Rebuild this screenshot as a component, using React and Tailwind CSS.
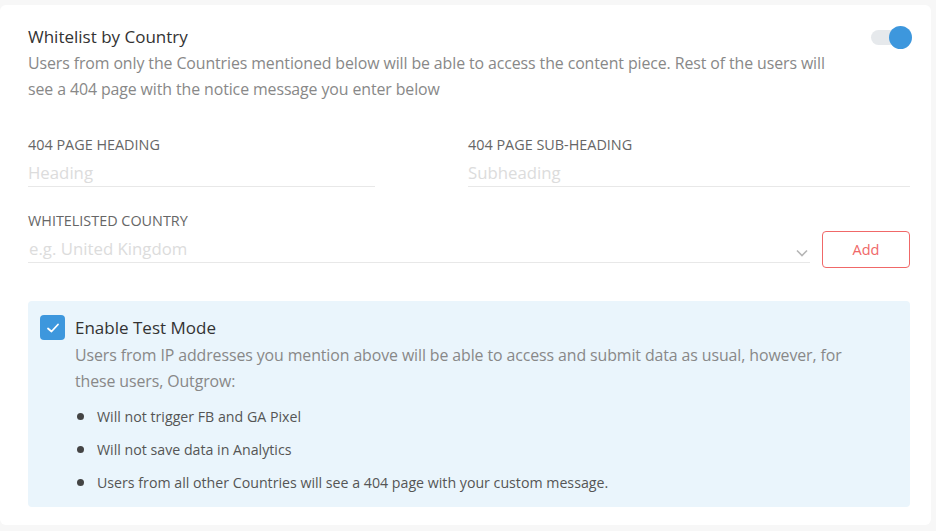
import React from "react";

export default function App() {
  return (
    <div className="w-[936px] h-[531px] bg-[#f7f7f7] pt-[5px] pr-[5px] pb-[6px]" style={{ fontFamily: "'Open Sans', Lato, sans-serif" }}>
      <div className="h-full bg-white rounded-[6px] pl-[28px] pr-[21px] pt-[18px]">
        <div className="flex justify-between">
          <div className="w-[812px]">
            <div className="text-[17px] leading-[28px] text-[#333]">Whitelist by Country</div>
            <p className="text-[15.9px] leading-[26px] text-[#888] mt-[-1px] tracking-[-0.1px]">
              Users from only the Countries mentioned below will be able to access the content piece. Rest of the users will see a 404 page with the notice message you enter below
            </p>
          </div>
          <div className="relative w-[41px] h-[23px] mt-[3px] mr-[-2px]">
            <div className="absolute left-0 top-[4px] w-[36px] h-[15px] rounded-full bg-[#e6e9ec]" />
            <div className="absolute right-0 top-0 w-[23px] h-[23px] rounded-full bg-[#3d97dd]" />
          </div>
        </div>

        <div className="flex gap-[93px] mt-[33px]">
          <div className="w-[347px]">
            <div className="text-[14.4px] leading-[20px] text-[#666]">404 PAGE HEADING</div>
            <div className="text-[16.8px] leading-[24px] text-[#dcdcdc] mt-[6px] pb-[1px] border-b border-[#e8e8e8]">Heading</div>
          </div>
          <div className="flex-1">
            <div className="text-[14.4px] leading-[20px] text-[#666]">404 PAGE SUB-HEADING</div>
            <div className="text-[16.8px] leading-[24px] text-[#dcdcdc] mt-[6px] pb-[1px] border-b border-[#e8e8e8]">Subheading</div>
          </div>
        </div>

        <div className="mt-[24px] text-[14.4px] leading-[20px] text-[#666]">WHITELISTED COUNTRY</div>
        <div className="flex items-end gap-[12px] mt-[0px]">
          <div className="flex-1 flex items-end justify-between border-b border-[#e8e8e8] pb-[1px]">
            <span className="text-[16.8px] leading-[24px] text-[#dcdcdc] pl-[1px]">e.g. United Kingdom</span>
            <svg width="14" height="10" viewBox="0 0 14 10" className="mb-[3px] mr-[1px]">
              <path d="M2 2.5 L7 7.5 L12 2.5" fill="none" stroke="#b5b5b5" strokeWidth="1.6" />
            </svg>
          </div>
          <button className="w-[88px] h-[37px] border border-[#f06868] rounded-[4px] text-[#f06868] text-[14.5px] mb-[-5px]">Add</button>
        </div>

        <div className="mt-[38px] bg-[#eaf5fc] rounded-[4px] pl-[12px] pt-[14px] pb-[8px] flex gap-[10px]">
          <div className="w-[25px] h-[25px] rounded-[4px] bg-[#3d97dd] flex items-center justify-center shrink-0">
            <svg width="14" height="12" viewBox="0 0 14 12">
              <path d="M2 6.5 L5.5 9.5 L12 2.5" fill="none" stroke="white" strokeWidth="1.8" strokeLinecap="round" strokeLinejoin="round" />
            </svg>
          </div>
          <div className="pr-[45px]">
            <div className="text-[17px] leading-[26px] text-[#333]">Enable Test Mode</div>
            <p className="text-[15.9px] leading-[26px] text-[#888] mt-[1px] tracking-[-0.1px]">
              Users from IP addresses you mention above will be able to access and submit data as usual, however, for these users, Outgrow:
            </p>
            <ul className="mt-[6px] text-[14.2px] leading-[20px] text-[#555]">
              <li className="flex items-center gap-[13px] h-[33px]"><span className="w-[7px] h-[7px] rounded-full bg-[#444] ml-[2px]" />Will not trigger FB and GA Pixel</li>
              <li className="flex items-center gap-[13px] h-[33px]"><span className="w-[7px] h-[7px] rounded-full bg-[#444] ml-[2px]" />Will not save data in Analytics</li>
              <li className="flex items-center gap-[13px] h-[33px]"><span className="w-[7px] h-[7px] rounded-full bg-[#444] ml-[2px]" />Users from all other Countries will see a 404 page with your custom message.</li>
            </ul>
          </div>
        </div>
      </div>
    </div>
  );
}
